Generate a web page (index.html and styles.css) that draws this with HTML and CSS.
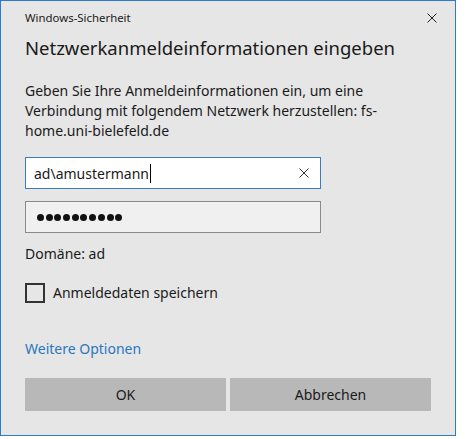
FILE: index.html
```html
<!DOCTYPE html>
<html>
<head>
    <title>Windows-Sicherheit</title>
    <link rel="stylesheet" href="styles.css">
</head>
<body>
    <div class="dialog">
        <div class="titlebar">
            <span class="caption">Windows-Sicherheit</span>
            <span class="close">
                <svg width="10" height="10" viewBox="0 0 10 10"><path d="M0.5 0.5 L9.5 9.5 M9.5 0.5 L0.5 9.5" stroke="#222" stroke-width="1"/></svg>
            </span>
        </div>

        <h1>Netzwerkanmeldeinformationen eingeben</h1>

        <p class="message">Geben Sie Ihre Anmeldeinformationen ein, um eine<br>Verbindung mit folgendem Netzwerk herzustellen: fs-<br>home.uni-bielefeld.de</p>

        <div class="field focused">
            <span class="value">ad\amustermann</span><span class="caret"></span>
            <span class="clear">
                <svg width="10" height="10" viewBox="0 0 10 10"><path d="M0.5 0.5 L9.5 9.5 M9.5 0.5 L0.5 9.5" stroke="#333" stroke-width="1"/></svg>
            </span>
        </div>

        <div class="field password">
            <span class="dot"></span><span class="dot"></span><span class="dot"></span><span class="dot"></span><span class="dot"></span><span class="dot"></span><span class="dot"></span><span class="dot"></span><span class="dot"></span><span class="dot"></span>
        </div>

        <div class="domain">Domäne: ad</div>

        <label class="remember">
            <span class="checkbox"></span>
            <span>Anmeldedaten speichern</span>
        </label>

        <a class="more" href="#">Weitere Optionen</a>

        <div class="buttons">
            <button>OK</button>
            <button>Abbrechen</button>
        </div>
    </div>
</body>
</html>
```
FILE: styles.css
```css
body {
    margin: 0;
    background-color: #ffffff;
    font-family: "Segoe UI", "Noto Sans", sans-serif;
    color: #1a1a1a;
}
.dialog {
    width: 456px;
    height: 436px;
    box-sizing: border-box;
    border: 1px solid #2f7cc4;
    background-color: #e6e6e6;
    padding: 0 24px;
}
.titlebar {
    display: flex;
    justify-content: space-between;
    align-items: center;
    height: 33px;
    margin-right: -24px;
    font-size: 11.4px;
}
.close {
    width: 46px;
    height: 33px;
    display: flex;
    align-items: center;
    justify-content: center;
}
.close svg, .clear svg {
    display: block;
}
h1 {
    margin: 0;
    font-size: 18.5px;
    font-weight: normal;
    line-height: 28px;
}
.message {
    margin: 19px 0 0;
    font-size: 14px;
    line-height: 20px;
    white-space: nowrap;
}
.field {
    width: 296px;
    height: 32px;
    box-sizing: border-box;
    margin-top: 16px;
    border: 1px solid #8a8a8a;
    background-color: #ffffff;
    display: flex;
    align-items: center;
    padding: 0 10px 0 8px;
    font-size: 14px;
}
.field.focused {
    border-color: #3a7cbc;
}
.caret {
    width: 1px;
    height: 19px;
    margin-left: 1px;
    background-color: #000;
}
.clear {
    margin-left: auto;
    padding-right: 1px;
}
.field.password {
    margin-top: 12px;
    background-color: #f0f0f0;
    padding-left: 11px;
    gap: 1.7px;
}
.dot {
    width: 7px;
    height: 7px;
    border-radius: 50%;
    background-color: #111;
}
.domain {
    margin-top: 11px;
    font-size: 14px;
    line-height: 20px;
}
.remember {
    display: flex;
    align-items: center;
    gap: 8px;
    margin-top: 19px;
    font-size: 14px;
    line-height: 20px;
}
.checkbox {
    width: 20px;
    height: 20px;
    box-sizing: border-box;
    border: 2px solid #333;
}
.more {
    display: block;
    margin-top: 36px;
    font-size: 14px;
    line-height: 20px;
    color: #2a77c0;
    text-decoration: none;
}
.buttons {
    display: flex;
    gap: 4px;
    margin-top: 19px;
}
button {
    flex: 1;
    height: 33px;
    border: none;
    background-color: #b8b8b8;
    font-family: inherit;
    font-size: 14px;
    color: #1a1a1a;
}
```
